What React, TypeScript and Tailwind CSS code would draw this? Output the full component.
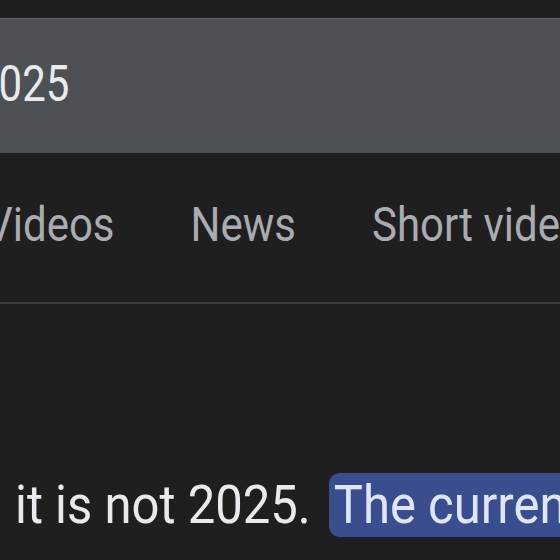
import React from "react";

export default function App() {
  const font = { fontFamily: "Roboto, 'Noto Sans', sans-serif" };
  return (
    <div className="w-[560px] h-[560px] overflow-hidden bg-[#1f1f1f]" style={font}>
      <div className="h-[18px]" />
      <div className="h-[135px] bg-[#4d5156] border-t border-[#5a5d62] flex items-center overflow-hidden">
        <span className="inline-block ml-[-25px] mb-[4px] text-[42px] leading-none text-[#e8eaed] whitespace-nowrap scale-y-[1.2]">
          2025
        </span>
      </div>
      <div className="h-[149px] flex items-center overflow-hidden">
        <div className="flex gap-[76px] ml-[-14px] whitespace-nowrap text-[42px] leading-none text-[#a9acb0] pb-[6px]">
          <span className="inline-block scale-y-[1.14]">Videos</span>
          <span className="inline-block scale-y-[1.14]">News</span>
          <span className="inline-block scale-y-[1.14]">Short videos</span>
        </div>
      </div>
      <div className="h-[2px] bg-[#3a3a3a]" />
      <div className="h-[169px]" />
      <div className="flex items-center whitespace-nowrap text-[49px] leading-none text-[#e8eaed] pl-[15px] h-[64px]">
        <span className="inline-block scale-y-[1.08]">it is not 2025.</span>
        <span className="ml-[18px] bg-[#3a4e8f] text-[#dfe6ff] rounded-[11px] h-[64px] flex items-center pl-[5px] pr-[20px]">
          <span className="inline-block scale-y-[1.08]">The current year is 2024</span>
        </span>
      </div>
    </div>
  );
}
